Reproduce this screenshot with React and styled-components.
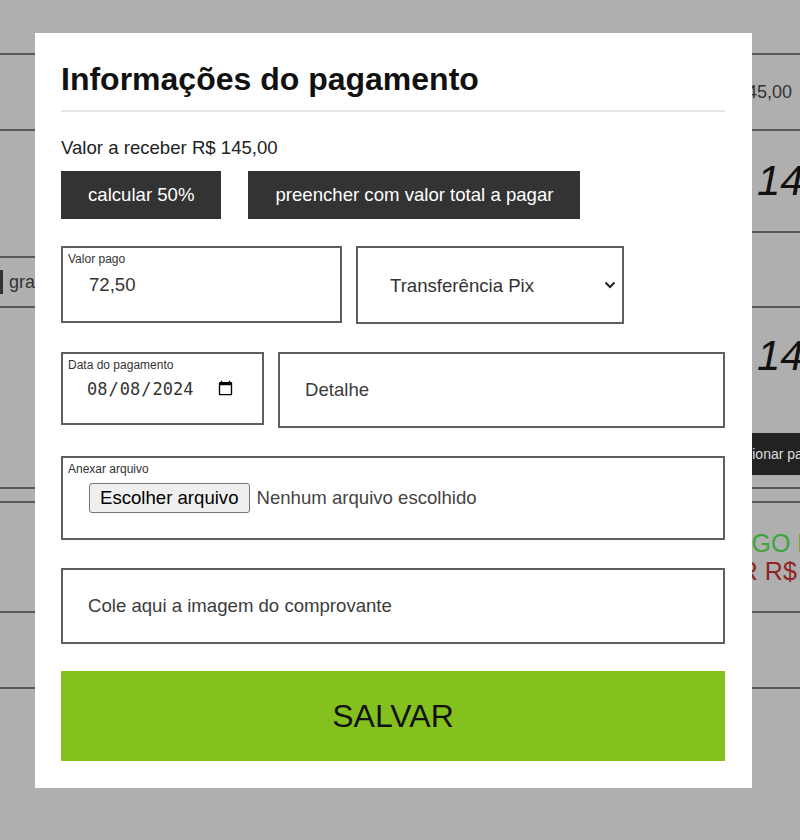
import React from 'react';
import styled, { createGlobalStyle } from 'styled-components';

const GlobalStyle = createGlobalStyle`
  * {
    box-sizing: border-box;
  }

  body {
    margin: 0;
    background: #afafaf;
    font-family: "Liberation Sans", Arial, sans-serif;
  }
`;

/* page behind the overlay */
const BgPage = styled.div`
  display: flex;
  justify-content: space-between;
  height: 840px;
  overflow: hidden;
`;

const Strip = styled.div`
  width: ${({ $w }) => $w}px;
  display: flex;
  flex-direction: column;
  overflow: hidden;
  flex: none;
`;

const BgRow = styled.div`
  height: ${({ $h }) => $h}px;
  flex: none;
  border-bottom: 2px solid #575757;
  display: flex;
  flex-direction: ${({ $column }) => ($column ? 'column' : 'row')};
  justify-content: ${({ $justify }) => $justify || 'flex-start'};
  align-items: ${({ $align }) => $align || 'center'};
  padding: ${({ $pad }) => $pad || '0'};
  white-space: nowrap;
`;

const BgChip = styled.span`
  width: 23px;
  height: 24px;
  margin-left: -20px;
  border: 3px solid #333;
  flex: none;
`;

const BgText = styled.span`
  font-size: ${({ $size }) => $size || 18}px;
  font-style: ${({ $italic }) => ($italic ? 'italic' : 'normal')};
  color: ${({ $color }) => $color || '#333'};
  line-height: ${({ $lh }) => $lh || 'normal'};
  padding-left: ${({ $left }) => $left || 0}px;
`;

const BgButton = styled.span`
  display: flex;
  align-items: center;
  height: 42px;
  margin-left: 100px;
  padding-left: 25px;
  background: #222;
  color: #ddd;
  font-size: 14px;
`;

/* modal */
const Modal = styled.div`
  position: fixed;
  top: 33px;
  left: 35px;
  width: 717px;
  height: 755px;
  background: #fff;
  padding: 28px 27px 27px 26px;
  display: flex;
  flex-direction: column;
`;

const Title = styled.h2`
  margin: 0;
  font-size: 32px;
  font-weight: 700;
  line-height: 37px;
  color: #111;
  padding-bottom: 12px;
  border-bottom: 2px solid #e0e5ea;
`;

const Amount = styled.p`
  margin: 25px 0 0;
  font-size: 18.6px;
  line-height: 21px;
  color: #222;
`;

const ButtonRow = styled.div`
  display: flex;
  gap: 27px;
  margin-top: 13px;
`;

const DarkButton = styled.button`
  height: 48px;
  padding: 0 27px;
  background: #333;
  color: #fff;
  border: none;
  font-family: inherit;
  font-size: 18.6px;
`;

const Form = styled.div`
  display: flex;
  flex-direction: column;
  gap: 28px;
  margin-top: 27px;
`;

const Row = styled.div`
  display: flex;
  gap: 14px;
  align-items: flex-start;
`;

const FieldBox = styled.div`
  display: grid;
  border: 2px solid #5e5e5e;
  width: ${({ $w }) => ($w ? `${$w}px` : 'auto')};
  height: ${({ $h }) => $h}px;
  flex: ${({ $grow }) => ($grow ? 1 : 'none')};

  & > * {
    grid-area: 1 / 1;
  }
`;

const FieldLabel = styled.label`
  align-self: start;
  margin: 4px 0 0 5px;
  font-size: 12px;
  line-height: 14px;
  color: #333;
`;

const TextInput = styled.input`
  align-self: center;
  width: 100%;
  border: none;
  outline: none;
  background: transparent;
  font-family: inherit;
  font-size: 18.6px;
  color: #333;
  padding: 0 0 0 ${({ $indent }) => $indent || 26}px;

  &::placeholder {
    color: #3c3c3c;
  }
`;

const DateInput = styled.input`
  align-self: center;
  width: 100%;
  border: none;
  outline: none;
  background: transparent;
  font-family: "DejaVu Sans Mono", "Liberation Mono", monospace;
  font-size: 17px;
  color: #333;
  padding: 0 26px 0 23px;
`;

const SelectBox = styled.div`
  display: flex;
  align-items: center;
  width: 268px;
  height: 78px;
  flex: none;
  border: 2px solid #5e5e5e;
`;

const Select = styled.select`
  flex: 1;
  appearance: none;
  border: none;
  outline: none;
  background: transparent;
  font-family: inherit;
  font-size: 18.6px;
  color: #333;
  padding-left: 32px;
`;

const Chevron = styled.svg`
  flex: none;
  margin-right: 6px;
`;

const FileRow = styled.div`
  align-self: center;
  display: flex;
  align-items: center;
  gap: 7px;
  padding-left: 26px;
`;

const FileButton = styled.button`
  background: #efefef;
  border: 1px solid #767676;
  border-radius: 3px;
  padding: 3px 10px;
  font-family: inherit;
  font-size: 18.6px;
  color: #000;
`;

const FileText = styled.span`
  font-size: 18.6px;
  color: #444;
`;

const SaveButton = styled.button`
  height: 90px;
  width: 100%;
  margin-top: -1px;
  background: #84c11f;
  border: none;
  font-family: inherit;
  font-size: 32px;
  color: #111;
`;

const App = () => (
  <>
    <GlobalStyle />
    <BgPage>
      <Strip $w={35}>
        <BgRow $h={55} />
        <BgRow $h={76} />
        <BgRow $h={127} />
        <BgRow $h={50}>
          <BgChip />
          <BgText $left={6}>gravar</BgText>
        </BgRow>
        <BgRow $h={181} />
        <BgRow $h={14} />
        <BgRow $h={110} />
        <BgRow $h={76} />
      </Strip>

      <Strip $w={200}>
        <BgRow $h={55} />
        <BgRow $h={76} $justify="flex-end" $pad="0 8px 0 0">
          <BgText>R$ 145,00</BgText>
        </BgRow>
        <BgRow $h={102}>
          <BgText $size={42} $italic $color="#111" $left={157}>145,00</BgText>
        </BgRow>
        <BgRow $h={75} />
        <BgRow $h={181} $column $align="stretch" $pad="24px 0 0">
          <BgText $size={42} $italic $color="#111" $left={157} $lh="48px">145,00</BgText>
          <div style={{ height: 53 }} />
          <BgButton>Adicionar pagamento</BgButton>
        </BgRow>
        <BgRow $h={14} />
        <BgRow $h={110} $column $align="stretch" $pad="26px 0 0">
          <BgText $size={25} $lh="28px" $color="#3aa53a" $left={120}>PAGO R$ 72,50</BgText>
          <BgText $size={25} $lh="28px" $color="#8e2424" $left={50}>A PAGAR R$ 72,50</BgText>
        </BgRow>
        <BgRow $h={76} />
      </Strip>
    </BgPage>

    <Modal>
      <Title>Informações do pagamento</Title>
      <Amount>Valor a receber R$ 145,00</Amount>

      <ButtonRow>
        <DarkButton>calcular 50%</DarkButton>
        <DarkButton>preencher com valor total a pagar</DarkButton>
      </ButtonRow>

      <Form>
        <Row>
          <FieldBox $w={281} $h={77}>
            <FieldLabel>Valor pago</FieldLabel>
            <TextInput defaultValue="72,50" />
          </FieldBox>
          <SelectBox>
            <Select defaultValue="pix">
              <option value="pix">Transferência Pix</option>
              <option value="dinheiro">Dinheiro</option>
              <option value="cartao">Cartão</option>
            </Select>
            <Chevron width="12" height="8" viewBox="0 0 12 8">
              <polyline points="1.5,1.5 6,6 10.5,1.5" fill="none" stroke="#222" strokeWidth="2" />
            </Chevron>
          </SelectBox>
        </Row>

        <Row>
          <FieldBox $w={203} $h={73}>
            <FieldLabel>Data do pagamento</FieldLabel>
            <DateInput type="date" defaultValue="2024-08-08" />
          </FieldBox>
          <FieldBox $grow $h={76}>
            <TextInput placeholder="Detalhe" $indent={25} />
          </FieldBox>
        </Row>

        <FieldBox $h={84}>
          <FieldLabel>Anexar arquivo</FieldLabel>
          <FileRow>
            <FileButton>Escolher arquivo</FileButton>
            <FileText>Nenhum arquivo escolhido</FileText>
          </FileRow>
        </FieldBox>

        <FieldBox $h={76}>
          <TextInput placeholder="Cole aqui a imagem do comprovante" $indent={25} />
        </FieldBox>

        <SaveButton>SALVAR</SaveButton>
      </Form>
    </Modal>
  </>
);

export default App;
